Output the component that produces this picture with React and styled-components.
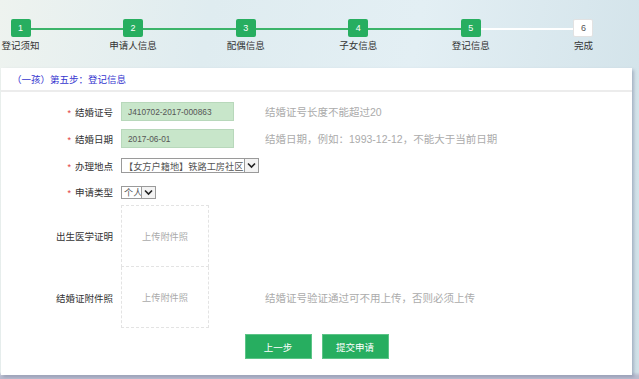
import React from "react";
import styled, { createGlobalStyle } from "styled-components";

const GlobalStyle = createGlobalStyle`
  html, body {
    margin: 0;
    padding: 0;
    overflow: hidden;
  }
  body {
    font-family: "Liberation Sans", "Noto Sans CJK SC", sans-serif;
    background:
      linear-gradient(to bottom, rgba(185, 188, 207, 0) 372px, #b9bccf 376px),
      linear-gradient(100deg, #eef3ef 0%, #dfecf0 30%, #e3eff4 60%, #d0e1e8 100%);
    min-height: 379px;
  }
`;

const Page = styled.div`
  width: 639px;
  height: 379px;
`;

const Stepper = styled.div`
  display: flex;
  align-items: flex-start;
  width: 604px;
  height: 68px;
  padding-top: 19px;
  box-sizing: border-box;
`;

const Step = styled.div`
  flex: none;
  width: 41px;
  display: flex;
  flex-direction: column;
  align-items: center;
  position: relative;
  z-index: 1;
`;

const StepBox = styled.div`
  width: 20px;
  height: 18px;
  border-radius: 2px;
  display: flex;
  align-items: center;
  justify-content: center;
  font-size: 9px;
  background: ${(p) => (p.$done ? "#27ae60" : "#fff")};
  color: ${(p) => (p.$done ? "#fff" : "#555")};
  border: ${(p) => (p.$done ? "none" : "1px solid #e2e2e2")};
  box-sizing: border-box;
`;

const StepLabel = styled.div`
  margin-top: 3px;
  font-size: 9.5px;
  line-height: 12px;
  white-space: nowrap;
  color: #333;
`;

const Connector = styled.div`
  flex: 1;
  height: 1.5px;
  margin: 9px -11px 0;
  background: ${(p) => (p.$done ? "#3cb46a" : "#fff")};
`;

const Panel = styled.div`
  margin-left: 1px;
  width: 631px;
  background: #fff;
  box-shadow: 2px 2px 3px rgba(110, 120, 150, 0.45);
  padding-bottom: 16px;
`;

const PanelHeader = styled.div`
  height: 22px;
  border-bottom: 2px solid #ececec;
  padding-left: 11px;
  display: flex;
  align-items: center;
  font-size: 9.5px;
  color: #3636cf;
`;

const Form = styled.div`
  padding-top: 6px;
`;

const Row = styled.div`
  display: grid;
  grid-template-columns: 112px 136px auto;
  column-gap: 8px;
  align-items: center;
  height: ${(p) => p.$h}px;
`;

const Label = styled.div`
  text-align: right;
  font-size: 9.5px;
  color: #333;
  white-space: nowrap;
`;

const Star = styled.span`
  color: #e23a3a;
  font-size: 9px;
  margin-right: 4px;
`;

const TextInput = styled.input`
  width: 113px;
  height: 19px;
  box-sizing: border-box;
  background: #c8e6ca;
  border: 1px solid #b8d8bb;
  padding: 0 6px;
  font-family: "Liberation Sans", sans-serif;
  font-size: 8.3px;
  color: #555;
  outline: none;
`;

const Select = styled.div`
  display: flex;
  align-items: stretch;
  width: ${(p) => p.$w}px;
  height: ${(p) => p.$h}px;
  box-sizing: border-box;
  border: 1px solid #9a9a9a;
  background: #fff;
`;

const SelectText = styled.div`
  flex: 1;
  display: flex;
  align-items: center;
  padding-left: 2px;
  font-size: 9.2px;
  color: #555;
  white-space: nowrap;
  overflow: hidden;
`;

const SelectArrow = styled.div`
  width: 13px;
  border-left: 1px solid #9a9a9a;
  background: #f3f3f3;
  display: flex;
  align-items: center;
  justify-content: center;
`;

const Hint = styled.div`
  font-size: 10.5px;
  color: #ababab;
  white-space: nowrap;
`;

const UploadBox = styled.div`
  width: 88px;
  height: 100%;
  box-sizing: border-box;
  border: 1px dashed #e3e3e3;
  border-top-style: ${(p) => (p.$first ? "dashed" : "none")};
  display: flex;
  align-items: center;
  justify-content: center;
  font-size: 9.2px;
  color: #aaa;
`;

const Actions = styled.div`
  margin-top: 6px;
  display: flex;
  justify-content: center;
  gap: 10px;
`;

const Button = styled.button`
  width: 67px;
  height: 25px;
  background: #27ae60;
  border: 1px solid #5cc487;
  color: #fff;
  font-family: "Liberation Sans", "Noto Sans CJK SC", sans-serif;
  font-size: 9.5px;
  cursor: pointer;
  padding: 0;
`;

const steps = [
  { n: 1, label: "登记须知" },
  { n: 2, label: "申请人信息" },
  { n: 3, label: "配偶信息" },
  { n: 4, label: "子女信息" },
  { n: 5, label: "登记信息" },
  { n: 6, label: "完成" },
];

function Chevron() {
  return (
    <svg width="9" height="7" viewBox="0 0 9 7">
      <path d="M1 1.5 L4.5 5 L8 1.5" fill="none" stroke="#222" strokeWidth="1.6" />
    </svg>
  );
}

export default function App() {
  const current = 5;
  return (
    <Page>
      <GlobalStyle />
      <Stepper>
        {steps.map((s, i) => (
          <React.Fragment key={s.n}>
            {i > 0 && <Connector $done={s.n <= current} />}
            <Step>
              <StepBox $done={s.n <= current}>{s.n}</StepBox>
              <StepLabel>{s.label}</StepLabel>
            </Step>
          </React.Fragment>
        ))}
      </Stepper>

      <Panel>
        <PanelHeader>（一孩）第五步：登记信息</PanelHeader>
        <Form>
          <Row $h={27}>
            <Label><Star>*</Star>结婚证号</Label>
            <TextInput defaultValue="J410702-2017-000863" />
            <Hint>结婚证号长度不能超过20</Hint>
          </Row>
          <Row $h={27}>
            <Label><Star>*</Star>结婚日期</Label>
            <TextInput defaultValue="2017-06-01" />
            <Hint>结婚日期，例如：1993-12-12，不能大于当前日期</Hint>
          </Row>
          <Row $h={27}>
            <Label><Star>*</Star>办理地点</Label>
            <Select $w={138} $h={15}>
              <SelectText>【女方户籍地】铁路工房社区</SelectText>
              <SelectArrow><Chevron /></SelectArrow>
            </Select>
          </Row>
          <Row $h={26}>
            <Label><Star>*</Star>申请类型</Label>
            <Select $w={35} $h={13}>
              <SelectText>个人</SelectText>
              <SelectArrow><Chevron /></SelectArrow>
            </Select>
          </Row>
          <Row $h={62}>
            <Label>出生医学证明</Label>
            <UploadBox $first>上传附件照</UploadBox>
          </Row>
          <Row $h={61}>
            <Label>结婚证附件照</Label>
            <UploadBox>上传附件照</UploadBox>
            <Hint>结婚证号验证通过可不用上传，否则必须上传</Hint>
          </Row>
          <Actions>
            <Button>上一步</Button>
            <Button>提交申请</Button>
          </Actions>
        </Form>
      </Panel>
    </Page>
  );
}
